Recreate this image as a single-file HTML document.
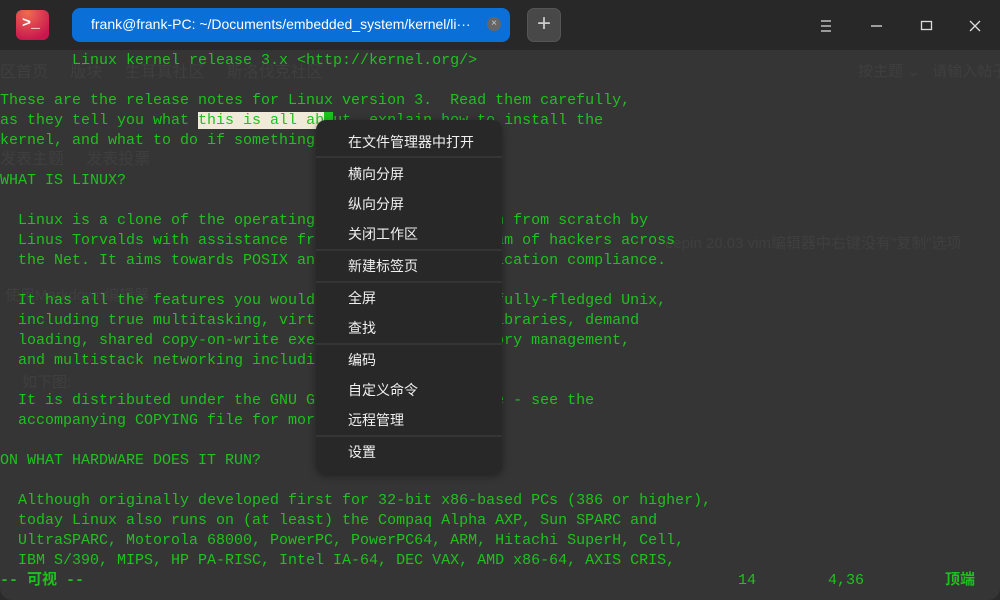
<!DOCTYPE html>
<html><head><meta charset="utf-8"><style>
*{margin:0;padding:0;box-sizing:border-box}
body{width:1000px;height:600px;overflow:hidden;background:#2a2a2a;position:relative;font-family:"Liberation Sans","Noto Sans CJK SC",sans-serif}
#title{position:absolute;left:0;top:0;width:1000px;height:50px;background:#282828}
#term{position:absolute;left:0;top:50px;width:1000px;height:550px;background:#353535;border-radius:0 0 12px 12px}
.g{position:absolute;color:#3f3f3f;font-size:15px;white-space:nowrap}
pre{position:absolute;left:0;top:51px;font-family:"Liberation Mono","Noto Sans CJK SC",monospace;font-size:15px;line-height:20px;color:#1ec21e;white-space:pre}
.st{position:absolute;top:571px;font-family:"Liberation Mono","Noto Sans CJK SC",monospace;font-size:15px;line-height:20px;color:#1ec21e;white-space:pre}
.sel{background:#efebd8;color:#1ec21e}
.cur{background:#1ec21e;color:#1ec21e}
#menu{position:absolute;left:316px;top:120px;width:186px;height:354px;background:#282828;border-radius:10px;box-shadow:0 2px 8px rgba(0,0,0,.4)}
.it{position:absolute;left:32px;color:#f0f0f0;font-size:14px;line-height:20px}
.sp{position:absolute;left:0;width:186px;height:2px;background:#353535}
</style></head><body>
<div id="title">
 <div style="position:absolute;left:16px;top:10px;width:33px;height:30px;border-radius:6px;background:radial-gradient(circle at 35% 10%,#f06a50,#c8174e 80%)"><span style="position:absolute;left:6px;top:5px;color:#fff;font:bold 15px 'Liberation Mono',monospace">&gt;_</span></div>
 <div style="position:absolute;left:72px;top:8px;width:438px;height:34px;background:#0a6fd6;border-radius:8px"><span style="position:absolute;left:19px;top:8px;color:#fff;font-size:14px">frank@frank-PC: ~/Documents/embedded_system/kernel/li···</span><div style="position:absolute;left:415px;top:9px;width:14px;height:14px;border-radius:50%;background:#666;color:#ccc;font-size:10px;text-align:center;line-height:14px">×</div></div>
 <div style="position:absolute;left:527px;top:8px;width:34px;height:34px;background:#484848;border-radius:7px;border:1px solid #555;color:#ccc;font-size:24px;text-align:center;line-height:30px">+</div>
 <svg style="position:absolute;left:810px;top:12px" width="180" height="28" stroke="#ddd" stroke-width="1.3" fill="none">
  <path d="M11 9h10M11 14h10M11 19h10"/><path d="M61 14h11"/><rect x="111.5" y="9.5" width="10" height="8"/><path d="M160 9l10 10M170 9l-10 10"/></svg>
</div>
<div id="term"></div>
<div class="g" style="left:0;top:58px;font-size:16px">区首页 &nbsp; &nbsp; 版块 &nbsp; &nbsp; 生耳真社区 &nbsp; &nbsp; 斯洛伐克社区</div>
<div class="g" style="left:0;top:145px;font-size:16px">发表主题 &nbsp; &nbsp; 发表投票</div>
<div class="g" style="left:858px;top:60px">按主题 ⌄ &nbsp; 请输入帖子</div>
<div class="g" style="left:665px;top:232px">eepin 20.03 vim编辑器中右键没有"复制"选项</div>
<div class="g" style="left:5px;top:284px">使用Markdown编辑器</div>
<div class="g" style="left:22px;top:371px">如下图:</div>
<pre>        Linux kernel release 3.x &lt;http://kernel.org/&gt;

These are the release notes for Linux version 3.  Read them carefully,
as they tell you what <span class="sel">this is all ab</span><span class="cur">o</span>ut, explain how to install the
kernel, and what to do if something goes wrong.

WHAT IS LINUX?

  Linux is a clone of the operating system Unix, written from scratch by
  Linus Torvalds with assistance from a loosely-knit team of hackers across
  the Net. It aims towards POSIX and Single UNIX Specification compliance.

  It has all the features you would expect in a modern fully-fledged Unix,
  including true multitasking, virtual memory, shared libraries, demand
  loading, shared copy-on-write executables, proper memory management,
  and multistack networking including IPv4 and IPv6.

  It is distributed under the GNU General Public License - see the
  accompanying COPYING file for more details.

ON WHAT HARDWARE DOES IT RUN?

  Although originally developed first for 32-bit x86-based PCs (386 or higher),
  today Linux also runs on (at least) the Compaq Alpha AXP, Sun SPARC and
  UltraSPARC, Motorola 68000, PowerPC, PowerPC64, ARM, Hitachi SuperH, Cell,
  IBM S/390, MIPS, HP PA-RISC, Intel IA-64, DEC VAX, AMD x86-64, AXIS CRIS,</pre>
<div class="st" style="left:0"><b>-- 可视 --</b></div>
<div class="st" style="left:738px">14</div>
<div class="st" style="left:828px">4,36</div>
<div class="st" style="left:945px"><b>顶端</b></div>
<div id="menu">
 <div class="it" style="top:12px">在文件管理器中打开</div>
 <div class="sp" style="top:36px"></div>
 <div class="it" style="top:44px">横向分屏</div>
 <div class="it" style="top:74px">纵向分屏</div>
 <div class="it" style="top:104px">关闭工作区</div>
 <div class="sp" style="top:129px"></div>
 <div class="it" style="top:136px">新建标签页</div>
 <div class="sp" style="top:161px"></div>
 <div class="it" style="top:168px">全屏</div>
 <div class="it" style="top:198px">查找</div>
 <div class="sp" style="top:223px"></div>
 <div class="it" style="top:230px">编码</div>
 <div class="it" style="top:260px">自定义命令</div>
 <div class="it" style="top:290px">远程管理</div>
 <div class="sp" style="top:315px"></div>
 <div class="it" style="top:322px">设置</div>
</div>
</body></html>
